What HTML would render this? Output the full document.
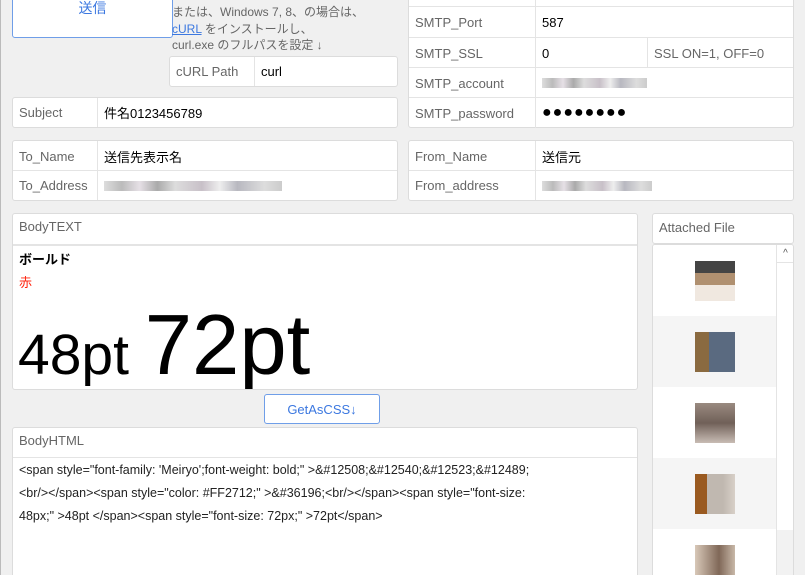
<!DOCTYPE html>
<html><head><meta charset="utf-8"><style>
*{box-sizing:border-box;margin:0;padding:0}
html,body{width:805px;height:575px;overflow:hidden}
body{background:#f0f0f0;font-family:"Liberation Sans","Noto Sans CJK JP",sans-serif;font-size:13px;color:#000;position:relative}
.a{position:absolute}
.box{position:absolute;background:#fff;border:1px solid #dcdcdc;border-radius:3px}
.lab{color:#666}
.row{position:absolute;left:0;right:0;border-top:1px solid #e4e4e4}
.cell{position:absolute;top:0;bottom:0;padding:0 6px;display:flex;align-items:center}
.blur{display:inline-block;height:10px;background:linear-gradient(90deg,#ddd,#bbb 10%,#e6e0e6 20%,#aaa 30%,#ddd 40%,#c8c0c8 55%,#eee 65%,#b8b8c0 75%,#ddd 90%,#ccc)}
.btn{position:absolute;background:#fff;border:1px solid #6f9ee8;border-radius:3px;color:#3c78e0;display:flex;align-items:center;justify-content:center}
.img{position:absolute;left:42px;width:40px;height:40px}
</style></head><body>
<div class="a" style="left:0;top:0;width:1px;height:575px;background:#bbb"></div>
<div class="btn" style="left:12px;top:-10px;width:161px;height:48px;font-size:14px;align-items:flex-start;padding-top:7px">送信</div>
<div class="a" style="left:172px;top:4px;font-size:12px;color:#666;line-height:16.5px">または、Windows 7, 8、の場合は、<br><span style="color:#3c78e0;text-decoration:underline">cURL</span> をインストールし、<br>curl.exe のフルパスを設定 ↓</div>
<div class="box" style="left:169px;top:56px;width:229px;height:31px"><div class="cell lab" style="left:0;width:85px;border-right:1px solid #e4e4e4">cURL Path</div><div class="cell" style="left:85px">curl</div></div>
<div class="box" style="left:12px;top:97px;width:386px;height:31px"><div class="cell lab" style="left:0;width:85px;border-right:1px solid #e4e4e4">Subject</div><div class="cell" style="left:85px">件名0123456789</div></div>
<div class="box" style="left:12px;top:140px;width:386px;height:61px">
<div class="row" style="top:0;height:30px;border:0"><div class="cell lab" style="left:0;width:85px;border-right:1px solid #e4e4e4">To_Name</div><div class="cell" style="left:85px">送信先表示名</div></div>
<div class="row" style="top:29px;height:30px"><div class="cell lab" style="left:0;width:85px;border-right:1px solid #e4e4e4">To_Address</div><div class="cell" style="left:85px"><span class="blur" style="width:178px"></span></div></div>
</div>
<div class="box" style="left:408px;top:-5px;width:386px;height:133px">
<div class="row" style="top:0;height:11px;border:0"><div class="cell" style="left:0;width:127px;border-right:1px solid #e4e4e4"></div></div>
<div class="row" style="top:10px;height:31px"><div class="cell lab" style="left:0;width:127px;border-right:1px solid #e4e4e4">SMTP_Port</div><div class="cell" style="left:127px">587</div></div>
<div class="row" style="top:41px;height:31px"><div class="cell lab" style="left:0;width:127px;border-right:1px solid #e4e4e4">SMTP_SSL</div><div class="cell" style="left:127px;width:112px;border-right:1px solid #e4e4e4">0</div><div class="cell lab" style="left:239px">SSL ON=1, OFF=0</div></div>
<div class="row" style="top:71px;height:31px"><div class="cell lab" style="left:0;width:127px;border-right:1px solid #e4e4e4">SMTP_account</div><div class="cell" style="left:127px"><span class="blur" style="width:105px"></span></div></div>
<div class="row" style="top:101px;height:31px"><div class="cell lab" style="left:0;width:127px;border-right:1px solid #e4e4e4">SMTP_password</div><div class="cell" style="left:127px;font-size:16px;letter-spacing:1px">●●●●●●●●</div></div>
</div>
<div class="box" style="left:408px;top:140px;width:386px;height:61px">
<div class="row" style="top:0;height:30px;border:0"><div class="cell lab" style="left:0;width:127px;border-right:1px solid #e4e4e4">From_Name</div><div class="cell" style="left:127px">送信元</div></div>
<div class="row" style="top:29px;height:30px"><div class="cell lab" style="left:0;width:127px;border-right:1px solid #e4e4e4">From_address</div><div class="cell" style="left:127px"><span class="blur" style="width:110px"></span></div></div>
</div>
<div class="box" style="left:12px;top:213px;width:626px;height:177px;overflow:hidden">
<div class="a lab" style="left:6px;top:5px">BodyTEXT</div>
<div class="row" style="top:30px;border-top:2px solid #e4e4e4"></div>
<div class="a" style="left:6px;top:35px;font-weight:bold">ボールド</div>
<div class="a" style="left:6px;top:58px;color:#ff2712">赤</div>
<div class="a" style="left:5px;top:87px;white-space:nowrap;line-height:90px"><span style="font-size:57px">48pt </span><span style="font-size:85px">72pt</span></div>
</div>
<div class="btn" style="left:264px;top:394px;width:116px;height:30px">GetAsCSS↓</div>
<div class="box" style="left:12px;top:427px;width:626px;height:160px">
<div class="a lab" style="left:6px;top:5px">BodyHTML</div>
<div class="row" style="top:29px"></div>
<div class="a" style="left:6px;top:31px;width:615px;line-height:23px;color:#222;font-size:12.5px">&lt;span style="font-family: 'Meiryo';font-weight: bold;" &gt;&amp;#12508;&amp;#12540;&amp;#12523;&amp;#12489;<br>&lt;br/&gt;&lt;/span&gt;&lt;span style="color: #FF2712;" &gt;&amp;#36196;&lt;br/&gt;&lt;/span&gt;&lt;span style="font-size:<br>48px;" &gt;48pt &lt;/span&gt;&lt;span style="font-size: 72px;" &gt;72pt&lt;/span&gt;</div>
</div>
<div class="box" style="left:652px;top:213px;width:142px;height:31px"><div class="a lab" style="left:6px;top:6px">Attached File</div></div>
<div class="box" style="left:652px;top:244px;width:142px;height:340px;overflow:hidden">
<div class="a" style="left:0;top:0;width:123px;height:71px;background:#fff"><div class="img" style="top:16px;background:linear-gradient(#444 0 30%,#b09070 30% 60%,#f0e8e0 60%)"></div></div>
<div class="a" style="left:0;top:71px;width:123px;height:71px;background:#f5f5f5"><div class="img" style="top:16px;background:linear-gradient(90deg,#8a6a40 0 35%,#5a6a80 35%)"></div></div>
<div class="a" style="left:0;top:142px;width:123px;height:71px;background:#fff"><div class="img" style="top:16px;background:linear-gradient(#998a80,#706058 50%,#c8bcb4)"></div></div>
<div class="a" style="left:0;top:213px;width:123px;height:71px;background:#f5f5f5"><div class="img" style="top:16px;background:linear-gradient(90deg,#9a5a20 0 30%,#c0b8b0 30% 70%,#d8d0c8)"></div></div>
<div class="a" style="left:0;top:284px;width:123px;height:71px;background:#fff"><div class="img" style="top:16px;background:linear-gradient(90deg,#d8c8b8,#806858 60%,#c8b8a8)"></div></div>
<div class="a" style="left:123px;top:0;width:18px;height:340px;background:#fff;border-left:1px solid #e4e4e4"><div style="height:18px;border-bottom:1px solid #e4e4e4;text-align:center;font-size:10px;color:#555;line-height:18px">^</div><div style="position:absolute;left:0;right:0;top:285px;bottom:0;background:#f2f2f2"></div></div>
</div>
</body></html>
